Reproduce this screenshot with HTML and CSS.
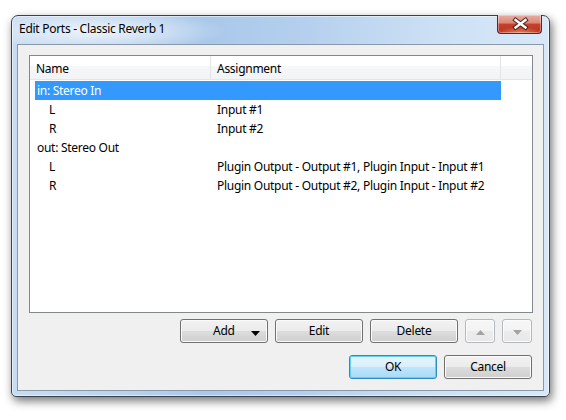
FILE: index.html
```html
<!DOCTYPE html>
<html>
<head>
<meta charset="utf-8">
<title>Edit Ports</title>
<link rel="stylesheet" href="styles.css">
</head>
<body>
<div class="window">
  <div class="titlebar">
    <span class="title">Edit Ports - Classic Reverb 1</span>
    <div class="close">
      <svg width="45" height="19" viewBox="0 0 45 19">
        <path d="M18.5 6 L28.5 13.5 M28.5 6 L18.5 13.5" stroke="#4b1f1a" stroke-width="4.4" fill="none" stroke-linecap="square"/>
        <path d="M18.5 6 L28.5 13.5 M28.5 6 L18.5 13.5" stroke="#ffffff" stroke-width="2.4" fill="none" stroke-linecap="square"/>
      </svg>
    </div>
  </div>
  <div class="client">
    <div class="list">
      <div class="header">
        <div class="hcell col-name">Name</div>
        <div class="hcell col-assign">Assignment</div>
        <div class="hcell col-fill"></div>
      </div>
      <div class="rows">
        <div class="row selected"><span class="c1">in: Stereo In</span><span class="c2"></span></div>
        <div class="row"><span class="c1 child">L</span><span class="c2">Input #1</span></div>
        <div class="row"><span class="c1 child">R</span><span class="c2">Input #2</span></div>
        <div class="row"><span class="c1">out: Stereo Out</span><span class="c2"></span></div>
        <div class="row"><span class="c1 child">L</span><span class="c2">Plugin Output - Output #1, Plugin Input - Input #1</span></div>
        <div class="row"><span class="c1 child">R</span><span class="c2">Plugin Output - Output #2, Plugin Input - Input #2</span></div>
      </div>
    </div>
    <div class="btnrow row1">
      <div class="btn btn-add"><span class="lbl">Add</span>
        <svg class="arrow" width="9" height="5" viewBox="0 0 9 5"><polygon points="0,0 9,0 4.5,5" fill="#000"/></svg>
      </div>
      <div class="btn">Edit</div>
      <div class="btn">Delete</div>
      <div class="btn small disabled">
        <svg width="9" height="5" viewBox="0 0 9 5"><polygon points="0,5 9,5 4.5,0" fill="#a3a3a3"/></svg>
      </div>
      <div class="btn small disabled">
        <svg width="9" height="5" viewBox="0 0 9 5"><polygon points="0,0 9,0 4.5,5" fill="#a3a3a3"/></svg>
      </div>
    </div>
    <div class="btnrow row2">
      <div class="btn default">OK</div>
      <div class="btn">Cancel</div>
    </div>
  </div>
</div>
</body>
</html>
```

FILE: styles.css
```css
* { box-sizing: border-box; }
html, body { margin: 0; }
body {
  width: 566px;
  height: 420px;
  overflow: hidden;
  padding: 15px 0 0 11px;
  background: #ffffff;
  font-family: "Noto Sans", "Open Sans", sans-serif;
  font-size: 12px;
  letter-spacing: -0.28px;
  color: #000;
}

.window {
  width: 539px;
  height: 382px;
  border: 1px solid #39424c;
  border-radius: 7px 7px 5px 5px;
  background: linear-gradient(90deg, #c8dcf1 0%, #bad3ee 20%, #a9c8ea 36%, #b5d0ee 55%, #cde1f5 80%, #d8e8f8 100%);
  box-shadow: 2px 4px 10px rgba(0,0,0,0.55), inset 0 0 0 1px rgba(255,255,255,0.5);
  display: flex;
  flex-direction: column;
}

.titlebar {
  height: 28px;
  display: flex;
  justify-content: space-between;
  align-items: flex-start;
  padding: 0 7px 0 7px;
  border-radius: 6px 6px 0 0;
  background: radial-gradient(ellipse 130px 20px at 85px 15px, rgba(255,255,255,0.75), rgba(255,255,255,0));
}

.title {
  padding-top: 5px;
  line-height: 16px;
  color: #000;
}

.close {
  margin-top: -1px;
  width: 45px;
  height: 19px;
  border: 1px solid #5a2620;
  border-top: none;
  border-radius: 0 0 4px 4px;
  background:
    radial-gradient(ellipse 22px 6px at 50% 100%, rgba(240,150,110,0.8), rgba(240,150,110,0)),
    linear-gradient(#e9ada2 0%, #dc8777 45%, #c7402d 50%, #b93321 100%);
  box-shadow: inset 0 0 0 1px rgba(255,255,255,0.35);
}
.close svg { display: block; margin: -1px 0 0 -1px; }

.client {
  flex: 1;
  margin: 0 5px 5px 5px;
  border: 1px solid #8a99aa;
  background: #f0f0f0;
  padding: 10px 10px 11px 11px;
  display: flex;
  flex-direction: column;
}

.list {
  height: 258px;
  border: 1px solid #828790;
  background: #ffffff;
}

.header {
  display: flex;
  height: 24px;
  border-bottom: 1px solid #e3e5e8;
  background: linear-gradient(#ffffff 0%, #ffffff 45%, #f6f7f9 45%, #f2f3f5 100%);
}
.hcell {
  padding: 2px 0 0 6px;
  line-height: 21px;
  border-right: 1px solid #e2e4e8;
  white-space: nowrap;
}
.col-name { width: 181px; }
.col-assign { width: 290px; }
.col-fill { flex: 1; border-right: none; }

.rows { padding-top: 1px; }
.row {
  display: flex;
  height: 19px;
  line-height: 19px;
  margin-left: 5px;
  width: 466px;
  white-space: nowrap;
}
.row.selected { background: #3399ff; color: #ffffff; }
.c1 { width: 176px; padding-left: 2px; }
.c1.child { padding-left: 14px; }
.c2 { width: 290px; padding-left: 6px; }

.btnrow {
  display: flex;
  justify-content: flex-end;
  gap: 7px;
  padding-right: 1px;
}
.row1 { margin-top: 6px; }
.row2 { margin-top: 12px; }

.btn {
  width: 88px;
  height: 24px;
  border: 1px solid #707070;
  border-radius: 3px;
  background: linear-gradient(#f2f2f2 0%, #ebebeb 50%, #dddddd 50%, #cfcfcf 100%);
  box-shadow: inset 0 0 0 1px #fbfbfb;
  display: flex;
  align-items: center;
  justify-content: center;
  line-height: 22px;
}
.btn-add {
  justify-content: flex-start;
  padding: 0 7px 0 32px;
}
.btn-add .arrow { margin-left: auto; margin-top: 4px; }
.btn.small { width: 30px; }
.btn.small svg { margin-top: 3px; }
.btn.disabled {
  border-color: #b5b9bd;
  background: linear-gradient(#f7f7f7 0%, #f3f3f3 50%, #ececec 50%, #e8e8e8 100%);
}
.btn.default {
  border-color: #2e8cc4;
  background: linear-gradient(#e5f5fd 0%, #d9f0fc 50%, #bee6fd 50%, #a9daf6 100%);
  box-shadow: inset 0 0 0 1px #61d1f8;
}
```
